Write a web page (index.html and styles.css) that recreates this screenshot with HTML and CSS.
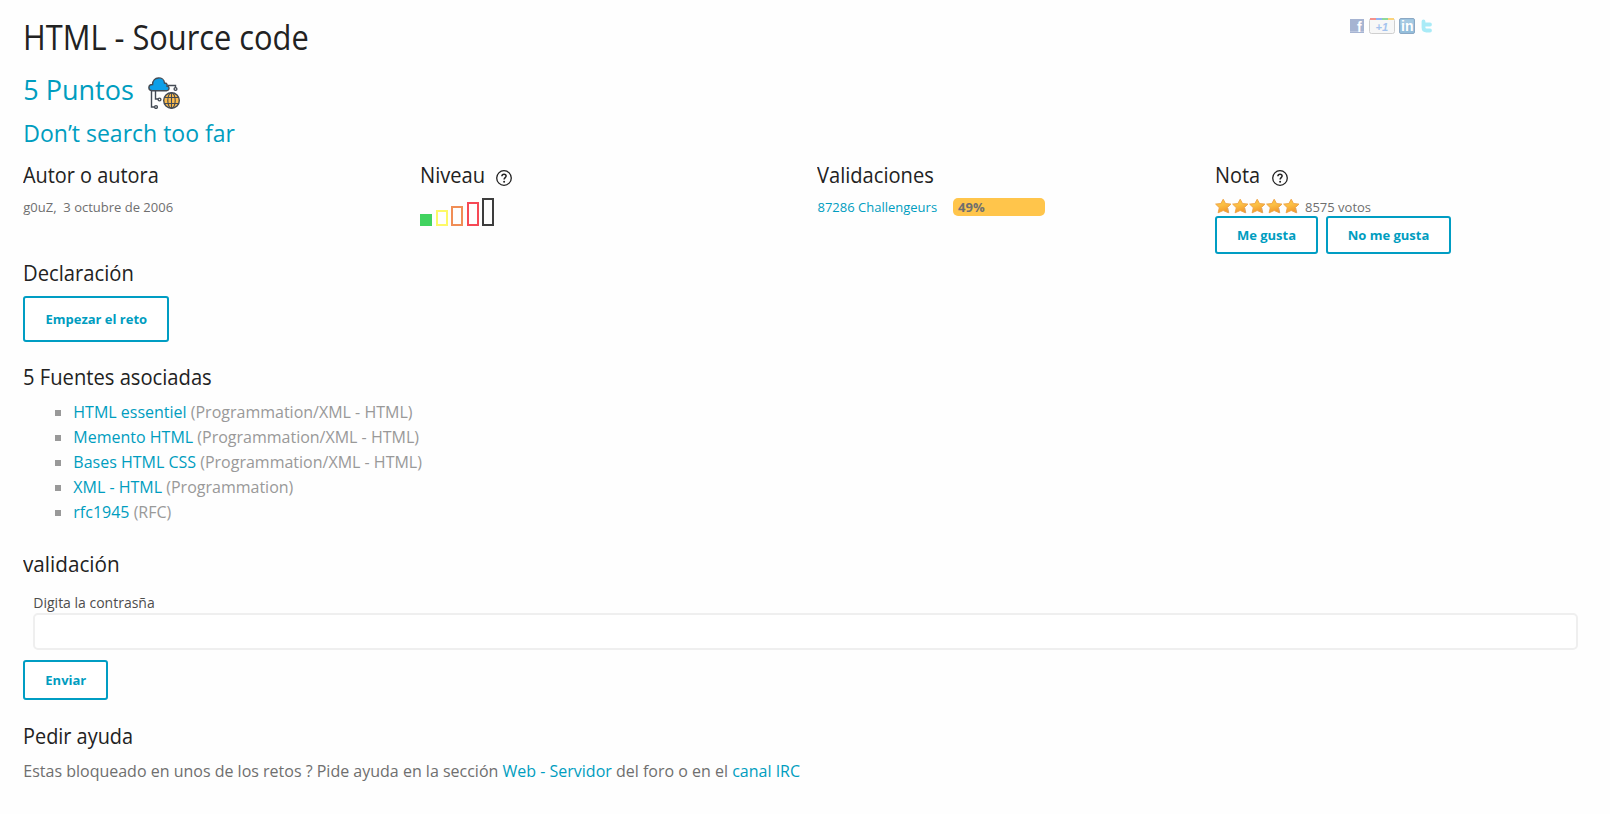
FILE: index.html
```
<!DOCTYPE html>
<html lang="es">
<head>
<meta charset="utf-8">
<title>HTML - Source code</title>
<link rel="stylesheet" href="styles.css">
</head>
<body>
<svg width="0" height="0" class="defs" aria-hidden="true">
  <defs>
    <linearGradient id="gold" x1="0" y1="0" x2="0.3" y2="1"><stop offset="0" stop-color="#fdc93c"/><stop offset=".5" stop-color="#fbbf45"/><stop offset="1" stop-color="#f39a2b"/></linearGradient>
    <symbol id="star" viewBox="0 0 17 16"><path d="M8.2 1.2 10.5 5.5 16 6.1 12.200 9.700 13.400 14.8 8.2 12.500 3.1 14.8 4.3 9.700.6 6.1 5.900 5.500Z" fill="url(#gold)" stroke="#eda145" stroke-width=".9" stroke-linejoin="round"/><path d="M13.8 14.8 12.8 10" stroke="#c9905a" stroke-width=".7"/></symbol>
    <symbol id="help" viewBox="0 0 16 16"><circle cx="8" cy="8" r="7.3" fill="none" stroke="#222" stroke-width="1.3"/><path d="M5.9 6.2C6 3.5 10.1 3.6 10.1 6.1 10.1 7.6 8.1 7.7 8.1 9.5" fill="none" stroke="#222" stroke-width="1.5"/><circle cx="8.1" cy="11.7" r="1" fill="#222"/></symbol>
  </defs>
</svg>
<main class="page">
  <header class="top">
    <h1 class="title"><span>HTML - Source code</span></h1>
    <div class="social">
      <svg class="fb" width="14" height="14" viewBox="0 0 14 14"><rect width="14" height="14" fill="#a6b4d2"/><path d="M0 12.5H14" stroke="#bcc7df"/><text x="7" y="12.500" font-size="14" font-weight="700" fill="#fff">f</text></svg>
      <svg class="plus" width="26" height="16" viewBox="0 0 26 16"><rect x=".5" y=".5" width="25" height="15" rx="2" fill="#f7f7f7" stroke="#cfcfcf"/><path d="M1 1H7" stroke="#f5928c" stroke-width="2"/><path d="M7 1H13" stroke="#92b4f5" stroke-width="2"/><path d="M13 1H19" stroke="#8ed99b" stroke-width="2"/><path d="M19 1H25" stroke="#fbd37c" stroke-width="2"/><text x="6.500" y="12.500" font-size="11" font-weight="700" font-style="italic" fill="#a4c3ee">+1</text></svg>
      <svg class="in" width="16" height="16" viewBox="0 0 16 16"><rect x=".5" y=".5" width="15" height="15" rx="1.500" fill="#94bedb" stroke="#8ba8c4"/><path d="M1.500 1.500H14.500V7H1.500Z" fill="#a6cae2"/><text x="2" y="13.300" font-size="14" font-weight="700" fill="#fff">in</text></svg>
      <svg class="tw" width="14" height="16" viewBox="0 0 14 16"><path d="M4.500 3.500V9.500Q4.500 12.500 7.500 12.500H11M4.500 6.500H11" fill="none" stroke="#a9ebf7" stroke-width="3.800" stroke-linecap="round" stroke-linejoin="round"/></svg>
    </div>
  </header>
  <h2 class="points"><span>5 Puntos</span>
    <svg class="cat" width="32" height="32" viewBox="0 0 32 32" fill="none" stroke="#444b54" stroke-width="1.400"><path d="M3.500 14V30H6.500M7.500 14V22H10M20 8.500H27.500V10.500"/><circle cx="8" cy="30" r="1.400"/><circle cx="11.500" cy="22.500" r="1.400"/><circle cx="27.500" cy="12" r="1.400"/><path d="M4 13.700C-.3 13.200-.2 7.300 4.600 7.500 4.500-1 16-1 16.500 6 19 6 19.500 8 19 9 22 9.500 21.500 13.500 18.500 13.700Z" fill="#0c9fe8"/><circle cx="23.500" cy="23.500" r="7.800" fill="#fdbb4b"/><g stroke-width="1.100"><ellipse cx="23.500" cy="23.500" rx="3.700" ry="7.800"/><path d="M23.500 15.500V31.500M16.500 20.500H30.500M16.500 26.500H30.500"/></g></svg>
  </h2>
  <h3 class="subtitle"><span>Don’t search too far</span></h3>
  <section class="facts">
    <div class="fact">
      <h4 class="heading"><span class="h-author">Autor o autora</span></h4>
      <p class="small">g0uZ,&nbsp; 3 octubre de 2006</p>
    </div>
    <div class="fact">
      <h4 class="heading"><span class="h-level">Niveau</span><svg class="help"><use href="#help"/></svg></h4>
      <div class="levels"><i class="lv lv1"></i><i class="lv lv2"></i><i class="lv lv3"></i><i class="lv lv4"></i><i class="lv lv5"></i></div>
    </div>
    <div class="fact">
      <h4 class="heading"><span class="h-valid">Validaciones</span></h4>
      <div class="small valid"><a>87286 Challengeurs</a><b class="gauge">49%</b></div>
    </div>
    <div class="fact">
      <h4 class="heading"><span class="h-note">Nota</span><svg class="help"><use href="#help"/></svg></h4>
      <div class="small votes"><svg class="star"><use href="#star"/></svg><svg class="star"><use href="#star"/></svg><svg class="star"><use href="#star"/></svg><svg class="star"><use href="#star"/></svg><svg class="star"><use href="#star"/></svg><span class="count">8575 votos</span></div>
      <div class="likes"><button class="btn like">Me gusta</button><button class="btn dislike">No me gusta</button></div>
    </div>
  </section>
  <section class="statement">
    <h4 class="heading"><span class="h-decl">Declaración</span></h4>
    <button class="btn start">Empezar el reto</button>
  </section>
  <section class="sources">
    <h4 class="heading"><span class="h-sources">5 Fuentes asociadas</span></h4>
    <ul class="list">
      <li><a>HTML essentiel</a> (Programmation/XML - HTML)</li>
      <li><a>Memento HTML</a> (Programmation/XML - HTML)</li>
      <li><a>Bases HTML CSS</a> (Programmation/XML - HTML)</li>
      <li><a>XML - HTML</a> (Programmation)</li>
      <li><a>rfc1945</a> (RFC)</li>
    </ul>
  </section>
  <section class="validation">
    <h4 class="heading"><span class="h-form">validación</span></h4>
    <label class="label" for="pass">Digita la contrasña</label>
    <input class="field" id="pass" type="text">
    <button class="btn send">Enviar</button>
  </section>
  <section class="aid">
    <h4 class="heading"><span class="h-aid">Pedir ayuda</span></h4>
    <p class="text">Estas bloqueado en unos de los retos ? Pide ayuda en la sección <a>Web - Servidor</a> del foro o en el <a>canal IRC</a></p>
  </section>
</main>
</body>
</html>
```
FILE: styles.css
```
* { box-sizing: border-box; }
body { margin: 0; background: #fefefe; font-family: "Open Sans", sans-serif; font-size: 16px; color: #6f6f6f; }
h1, h2, h3, h4, p, ul { margin: 0; padding: 0; font-weight: 400; }
a { color: #009dbf; }
.defs { position: absolute; }
.page { padding: 16px 0 0 23.300px; }
.top { display: flex; height: 40px; }
.title { width: 1326.700px; padding-top: 1px; font-size: 34px; line-height: 40px; color: #222; white-space: nowrap; }
.title span { display: inline-block; transform: scaleX(.906); transform-origin: 0 0; }
.social { display: flex; font-family: "Liberation Sans", sans-serif; }
.fb { margin: 3px 5px 0 0; }
.plus { margin: 2px 4px 0 0; }
.in { margin: 2px 4px 0 0; }
.tw { margin-top: 2px; }
.points { display: flex; margin-top: 14px; font-size: 27px; line-height: 40px; color: #009dbf; }
.cat { margin: 7px 0 0 14px; }
.subtitle { margin-top: 7px; font-size: 23px; line-height: 32px; color: #009dbf; }
.facts { display: grid; grid-template-columns: 396.9px 397.3px 397.5px 397.3px; margin-top: 10px; height: 98px; }
.heading { display: flex; font-size: 22px; line-height: 30px; color: #222; }
.heading span { white-space: nowrap; transform: scaleX(.904); transform-origin: 0 0; }
.heading .h-level { width: 64.300px; transform: scaleX(.915); }
.heading .h-valid { transform: scaleX(.914); }
.heading .h-note { width: 45px; }
.heading .h-decl { transform: scaleX(.918); }
.heading .h-sources { transform: scaleX(.917); }
.heading .h-form { transform: scaleX(.94); }
.help { width: 16px; height: 16px; margin: 11px 0 0 12px; }
.small { margin-top: 8px; font-size: 13px; line-height: 20px; }
.levels { display: flex; align-items: flex-end; gap: 3.500px; height: 28px; margin-top: 9px; }
.lv { width: 12px; border: 2px solid; }
.lv1 { height: 12px; background: #41d35f; border-color: #41d35f; }
.lv2 { height: 16px; border-color: #fdf967; }
.lv3 { height: 20px; border-color: #f08d55; }
.lv4 { height: 24px; border-color: #f64955; }
.lv5 { height: 28px; border-color: #3d3d3d; }
.valid { display: flex; }
.gauge { width: 92px; height: 18px; margin: 1px 0 0 15.500px; padding-left: 5.500px; border-radius: 5px; background: #ffc54b; line-height: 18px; }
.votes { display: flex; height: 19px; }
.star { width: 17px; height: 16px; margin-top: 1px; }
.count { margin-left: 5px; }
.likes { display: flex; gap: 8px; }
.btn { display: block; padding: 0; border: 2px solid #009dc3; border-radius: 3px; background: #fff; color: #009dbf; font: 700 13px "Open Sans", sans-serif; }
.like { width: 103px; height: 38px; }
.dislike { width: 125px; height: 38px; }
.start { width: 146px; height: 46px; margin-top: 9px; }
.sources { margin-top: 19px; }
.list { margin-top: 9px; padding-left: 50px; line-height: 25px; list-style: none; color: #999; }
.list li { display: block; }
.list li::before { content: ""; display: inline-block; width: 6px; height: 6px; margin: 0 12px 2px -18px; background: #999; }
.validation { margin-top: 23px; }
.label { display: block; margin: 15px 0 0 10px; font-size: 14px; line-height: 20px; color: #4d4d4d; }
.field { display: block; width: 1545px; height: 37px; margin-left: 10px; border: 2px solid #efefef; border-radius: 5px; background: #fff; }
.send { width: 85px; height: 40px; margin-top: 10px; }
.aid { margin-top: 20px; }
.text { margin-top: 9px; line-height: 25px; }
```
